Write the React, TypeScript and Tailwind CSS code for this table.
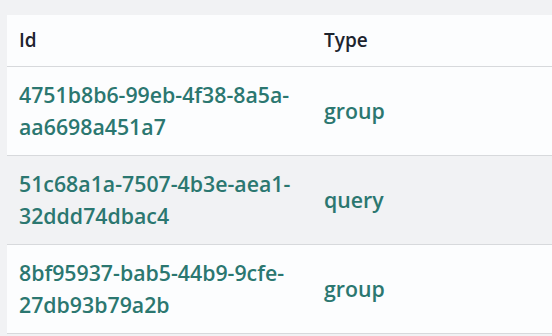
const rows = [
  { id: '4751b8b6-99eb-4f38-8a5a-aa6698a451a7', type: 'group' },
  { id: '51c68a1a-7507-4b3e-aea1-32ddd74dbac4', type: 'query' },
  { id: '8bf95937-bab5-44b9-9cfe-27db93b79a2b', type: 'group' },
]

export default function App() {
  return (
    <div
      className="h-[336px] w-[552px] overflow-hidden bg-[#f1f2f4] pl-[7px] pt-[15px]"
      style={{ fontFamily: '"Open Sans", "Noto Sans", sans-serif' }}
    >
      <table className="w-[560px] table-fixed border-collapse bg-[#fcfdfe]">
        <colgroup>
          <col className="w-[305px]" />
          <col />
        </colgroup>
        <thead>
          <tr className="border-b border-[#d7d9dc]">
            <th className="px-3 py-3 text-left text-[19px] leading-[27px] font-semibold text-[#1d242e]">
              Id
            </th>
            <th className="px-3 py-3 text-left text-[19px] leading-[27px] font-semibold text-[#1d242e]">
              Type
            </th>
          </tr>
        </thead>
        <tbody>
          {rows.map((row, i) => (
            <tr
              key={row.id}
              className={`border-b border-[#d7d9dc] ${i % 2 === 1 ? 'bg-[#f1f2f4]' : ''}`}
            >
              <td className="px-3 py-3 text-[21.3px] leading-8 font-semibold text-[#2b7770]">
                {row.id.slice(0, 24)}
                <br />
                {row.id.slice(24)}
              </td>
              <td className="px-3 py-3 align-middle text-[21.3px] leading-8 font-semibold text-[#2b7770]">
                {row.type}
              </td>
            </tr>
          ))}
        </tbody>
      </table>
    </div>
  )
}
